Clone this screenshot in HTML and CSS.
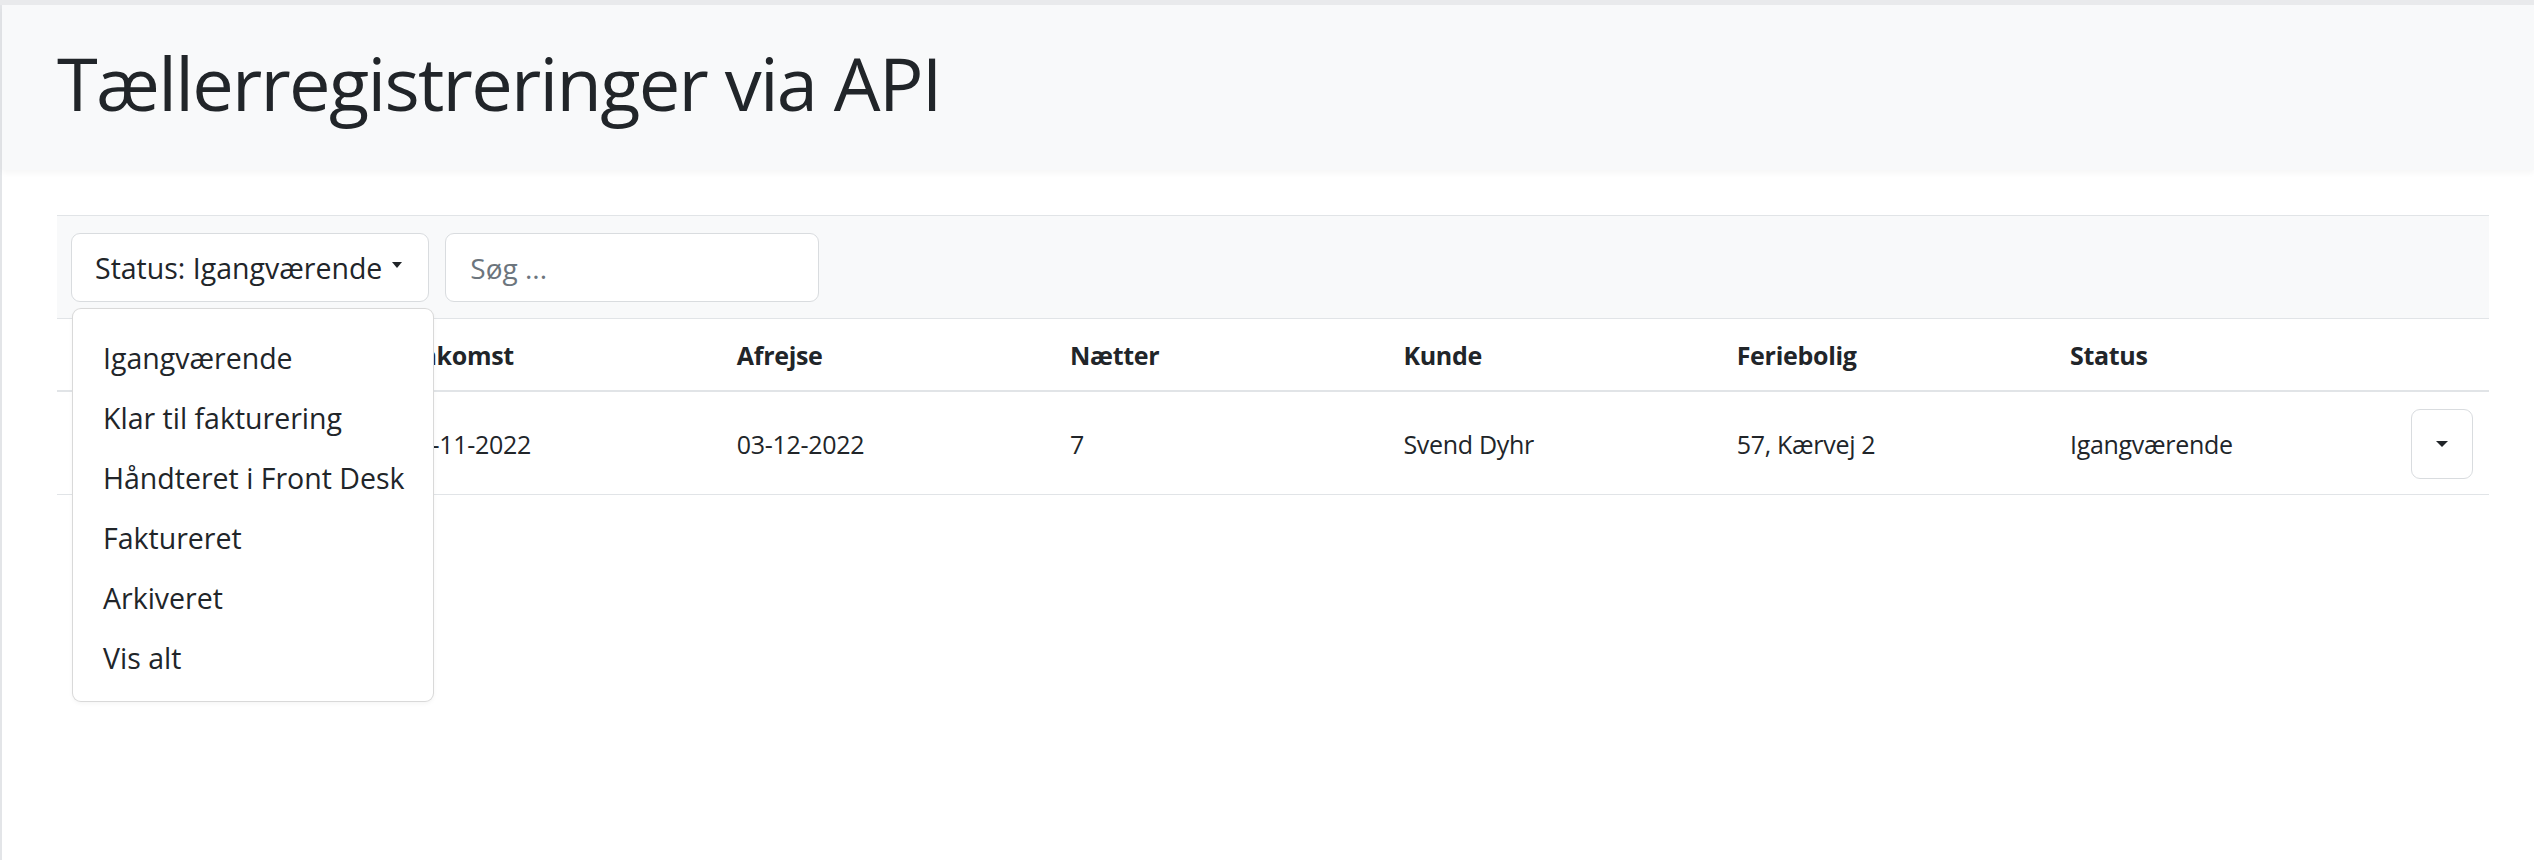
FILE: index.html
```html
<!DOCTYPE html>
<html lang="da">
<head>
  <meta charset="UTF-8">
  <meta name="viewport" content="width=device-width, initial-scale=1.0">
  <title>Tællerregistreringer via API</title>
  <link rel="stylesheet" href="styles.css">
</head>
<body>
  <div class="page">
    <header class="page-header">
      <h1>Tællerregistreringer via API</h1>
    </header>

    <main class="content">
      <div class="toolbar">
        <div class="status-filter">
          <button class="btn btn-status" type="button">Status: Igangværende<span class="caret"></span></button>
          <ul class="dropdown-menu">
            <li class="dropdown-item">Igangværende</li>
            <li class="dropdown-item">Klar til fakturering</li>
            <li class="dropdown-item">Håndteret i Front Desk</li>
            <li class="dropdown-item">Faktureret</li>
            <li class="dropdown-item">Arkiveret</li>
            <li class="dropdown-item">Vis alt</li>
          </ul>
        </div>
        <input class="search" type="text" placeholder="Søg ...">
      </div>

      <table class="registrations">
        <colgroup>
          <col class="col-id">
          <col class="col-data">
          <col class="col-data">
          <col class="col-data">
          <col class="col-data">
          <col class="col-data">
          <col class="col-data">
          <col>
        </colgroup>
        <thead>
          <tr>
            <th></th>
            <th>Ankomst</th>
            <th>Afrejse</th>
            <th>Nætter</th>
            <th>Kunde</th>
            <th>Feriebolig</th>
            <th>Status</th>
            <th></th>
          </tr>
        </thead>
        <tbody>
          <tr>
            <td></td>
            <td>26-11-2022</td>
            <td>03-12-2022</td>
            <td>7</td>
            <td>Svend Dyhr</td>
            <td>57, Kærvej 2</td>
            <td>Igangværende</td>
            <td class="actions">
              <button class="btn btn-row" type="button"><span class="caret caret-row"></span></button>
            </td>
          </tr>
        </tbody>
      </table>
    </main>
  </div>
</body>
</html>
```

FILE: styles.css
```css
* {
  margin: 0;
  padding: 0;
  box-sizing: border-box;
}

body {
  font-family: "Open Sans", "Noto Sans", Arial, sans-serif;
  color: #212529;
  background: #ffffff;
  border-top: 5px solid #e9eaec;
  min-height: 100vh;
}

.page {
  border-left: 2px solid #e3e5e8;
  min-height: calc(100vh - 5px);
}

.page-header {
  background: #f8f9fa;
  height: 165px;
  padding: 34px 0 0 55px;
  box-shadow: 0 3px 6px rgba(0, 0, 0, 0.04);
}

.page-header h1 {
  font-size: 74px;
  font-weight: 400;
  line-height: 1.2;
  letter-spacing: -1.7px;
}

.content {
  padding: 45px 45px 0 55px;
}

/* toolbar */
.toolbar {
  display: flex;
  gap: 16px;
  background: #f8f9fa;
  border-top: 1px solid #e1e4e7;
  border-bottom: 1px solid #e1e4e7;
  padding: 17px 14px 16px;
}

.status-filter {
  position: relative;
}

.btn {
  background: #ffffff;
  border: 1px solid #d9dcdf;
  border-radius: 9px;
  color: #212529;
  font-family: inherit;
  cursor: pointer;
}

.btn-status {
  height: 69px;
  padding: 0 26px 0 23px;
  font-size: 28.5px;
  display: flex;
  align-items: center;
}

.caret {
  display: inline-block;
  margin-left: 10px;
  margin-top: -6px;
  border-top: 6px solid #212529;
  border-left: 5px solid transparent;
  border-right: 5px solid transparent;
}

.search {
  width: 374px;
  height: 69px;
  border: 1px solid #d9dcdf;
  border-radius: 9px;
  padding: 0 24px;
  font-family: inherit;
  font-size: 28px;
  color: #495057;
  background: #ffffff;
  outline: none;
}

.search::placeholder {
  color: #6c757d;
}

.dropdown-menu {
  position: absolute;
  top: 75px;
  left: 1px;
  width: 362px;
  list-style: none;
  background: #ffffff;
  border: 1px solid rgba(0, 0, 0, 0.15);
  border-radius: 9px;
  padding: 19px 0 13px;
  box-shadow: 0 2px 4px rgba(0, 0, 0, 0.04);
  z-index: 10;
}

.dropdown-item {
  padding: 7.5px 30px;
  font-size: 28.5px;
  line-height: 45px;
  white-space: nowrap;
}

/* table */
.registrations {
  width: 100%;
  border-collapse: collapse;
  table-layout: fixed;
  font-size: 25px;
  letter-spacing: -0.3px;
}

.col-id {
  width: 324px;
}

.col-data {
  width: 333.3px;
}

.registrations th,
.registrations td {
  text-align: left;
  line-height: 39px;
  vertical-align: middle;
  white-space: nowrap;
}

.registrations th {
  font-weight: 700;
  padding: 17px 22.5px 15px;
  border-bottom: 2px solid #e1e4e7;
}

.registrations td {
  padding: 17px 22.5px 15px;
  border-bottom: 1px solid #e1e4e7;
}

.registrations td.actions {
  text-align: right;
  padding-right: 16px;
}

.btn-row {
  width: 62px;
  height: 70px;
  display: inline-flex;
  align-items: center;
  justify-content: center;
  vertical-align: middle;
}

.caret-row {
  margin: 0;
  border-top-width: 6px;
  border-left-width: 6px;
  border-right-width: 6px;
}
```
